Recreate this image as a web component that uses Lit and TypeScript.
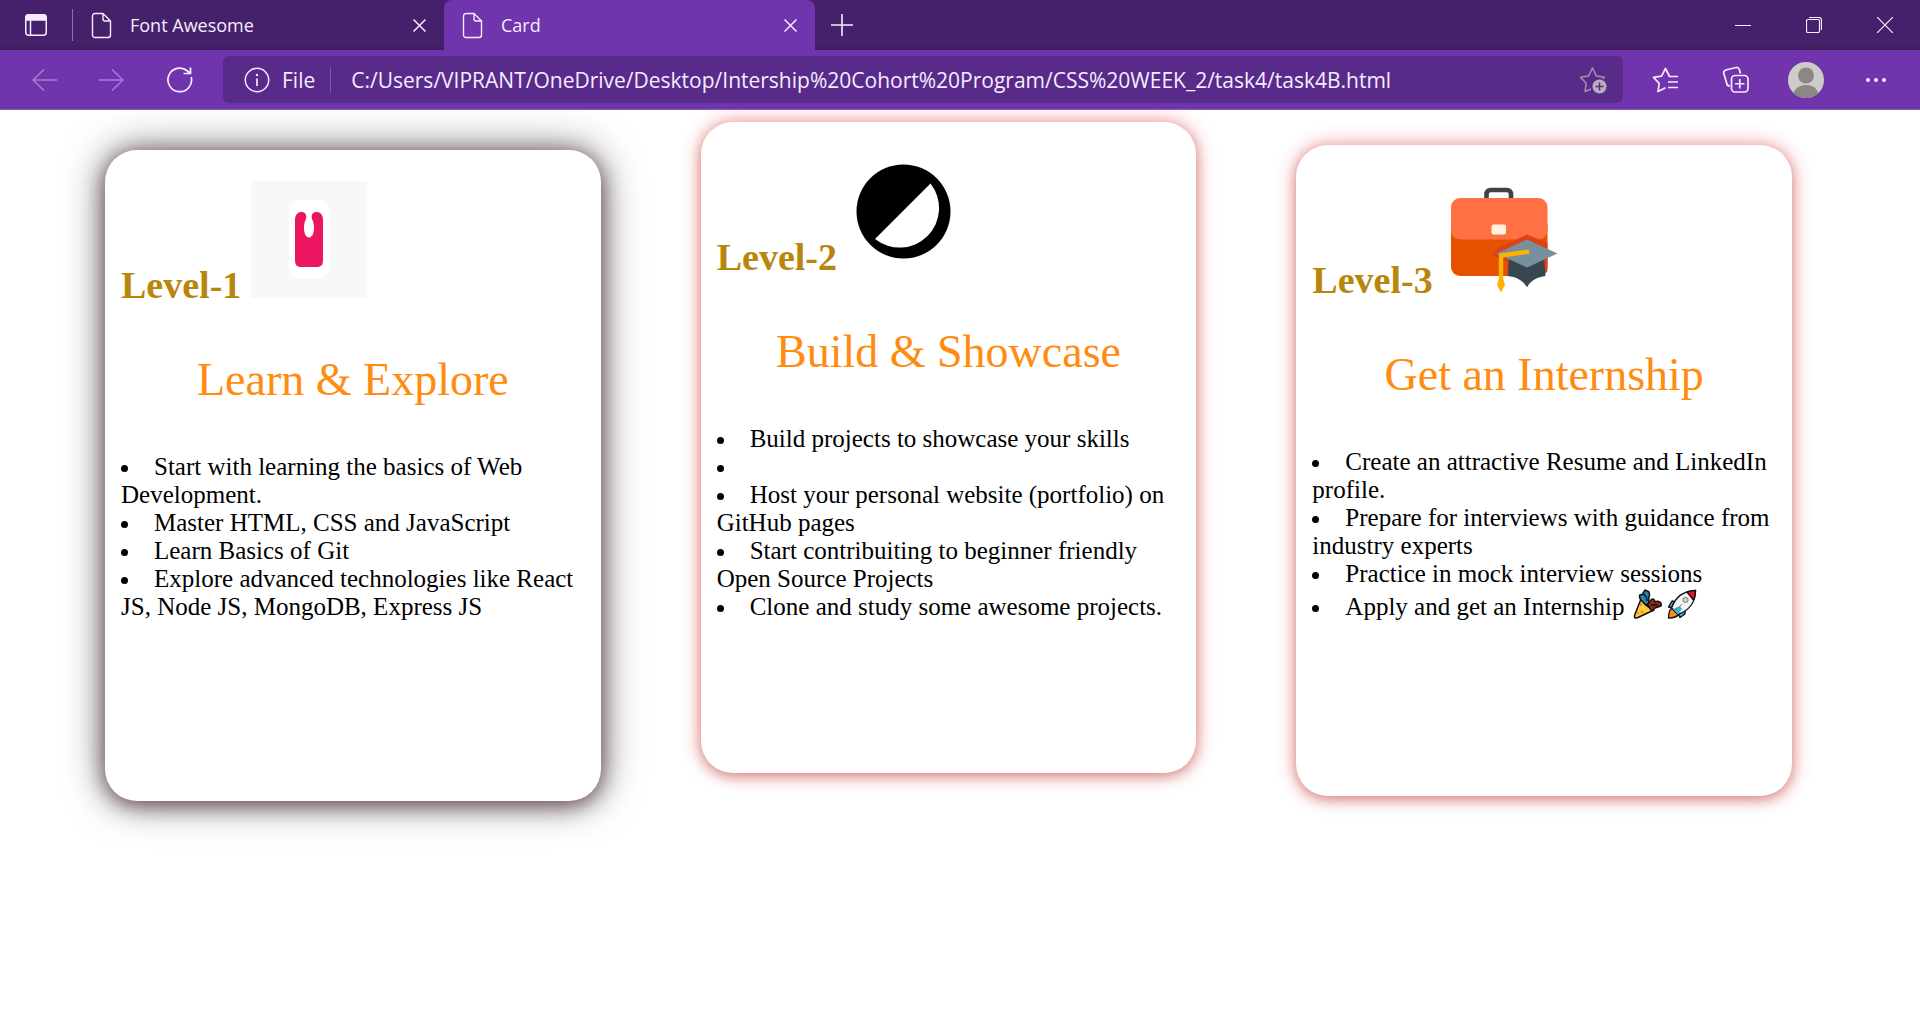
import { LitElement, html, css, svg, nothing } from "lit";
import { customElement, property } from "lit/decorators.js";

const docIcon = html`<svg class="doc" width="21" height="27" viewBox="0 0 21 27" aria-hidden="true">
  <path d="M4 1.5H12L19.5 9V23a2.5 2.5 0 0 1-2.5 2.5H4A2.5 2.5 0 0 1 1.5 23V4A2.5 2.5 0 0 1 4 1.5ZM12 1.5V7a2 2 0 0 0 2 2h5.500" />
</svg>`;

const closeIcon = html`<svg width="15" height="15" viewBox="0 0 15 15" aria-hidden="true">
  <path d="M1.500 1.500 13.500 13.500M13.500 1.500 1.500 13.500" stroke-width="1.500" />
</svg>`;

@customElement("browser-tab")
export class BrowserTab extends LitElement {
  @property() label = "";
  @property({ type: Boolean, reflect: true }) active = false;

  static styles = css`
    :host {
      display: block;
      flex: 0 1 371px;
      min-width: 0;
      color: #f6ecff;
    }
    :host([active]) {
      background: #7034ac;
      border-radius: 8px 8px 0 0;
    }
    .tab {
      display: flex;
      align-items: center;
      height: 50px;
      padding: 0 11px 0 18px;
    }
    .select {
      flex: 1;
      min-width: 0;
      display: flex;
      align-items: center;
      gap: 18px;
      font: inherit;
      line-height: 22px;
      text-align: left;
    }
    button {
      background: none;
      border: 0;
      padding: 0;
      color: inherit;
    }
    .close {
      display: flex;
      align-items: center;
      justify-content: center;
      width: 28px;
      height: 28px;
    }
    svg {
      flex: none;
      fill: none;
      stroke: currentColor;
      stroke-width: 1.4;
      stroke-linejoin: round;
    }
  `;

  render() {
    return html`<div class="tab">
      <button class="select">${docIcon}<span>${this.label}</span></button>
      <button class="close" aria-label="Close tab">${closeIcon}</button>
    </div>`;
  }
}

@customElement("browser-chrome")
export class BrowserChrome extends LitElement {
  static styles = css`
    :host {
      display: block;
      position: relative;
      font-family: "Open Sans", "Noto Sans", sans-serif;
      color: #f6ecff;
    }
    button {
      background: none;
      border: 0;
      padding: 0;
      color: inherit;
      font: inherit;
      display: flex;
      align-items: center;
      justify-content: center;
    }
    svg {
      fill: none;
      stroke: currentColor;
      stroke-width: 1.5;
      flex: none;
    }
    .strip {
      display: flex;
      align-items: center;
      height: 50px;
      font-size: 18px;
      background: linear-gradient(#46216b 0 42px, #3f1e60 50px);
    }
    .menu {
      width: 73px;
      height: 32px;
      border-right: 1px solid #9468b9;
      box-sizing: border-box;
    }
    .add {
      width: 54px;
      height: 50px;
    }
    .window {
      display: flex;
      margin-left: auto;
    }
    .window button {
      width: 71px;
      height: 50px;
    }
    .bar {
      display: flex;
      align-items: center;
      height: 60px;
      box-sizing: border-box;
      padding: 0 9px 0 10px;
      background: #7034ac;
      border-bottom: 1px solid #8a5cbe;
    }
    .nav {
      width: 68px;
      height: 47px;
    }
    .dim {
      color: #ab7ed8;
    }
    .address {
      flex: 1;
      min-width: 0;
      display: flex;
      align-items: center;
      height: 47px;
      margin: 0 8px 0 9px;
      padding: 0 16px 0 21px;
      box-sizing: border-box;
      border-radius: 6px;
      background: #582b8a;
      font-size: 21px;
    }
    .info {
      gap: 12px;
      padding-right: 15px;
      margin-right: 20px;
      height: 26px;
      border-right: 1px solid #8355b2;
    }
    input {
      flex: 1;
      min-width: 0;
      padding: 0;
      border: 0;
      outline: 0;
      background: none;
      color: inherit;
      font: inherit;
    }
    .action {
      width: 70px;
      height: 47px;
    }
    .muted {
      color: #a88fb5;
    }
  `;

  render() {
    return html`
      <div class="strip">
        <button class="menu" aria-label="Tab actions">
          <svg width="24" height="24" viewBox="0 0 24 24">
            <rect x="1.750" y="1.750" width="20.500" height="20.500" rx="3" />
            <path d="M2 7V4.500A2.500 2.500 0 0 1 4.500 2h15A2.500 2.500 0 0 1 22 4.500V7Z" fill="currentColor" />
            <path d="M6.500 7V22" />
          </svg>
        </button>
        <browser-tab label="Font Awesome"></browser-tab>
        <browser-tab label="Card" active></browser-tab>
        <button class="add" aria-label="New tab">
          <svg width="22" height="22" viewBox="0 0 22 22"><path d="M11 0V22M0 11H22" stroke-width="1.600" /></svg>
        </button>
        <div class="window">
          <button aria-label="Minimize">
            <svg width="16" height="16" viewBox="0 0 16 16"><path d="M0 8.500H16" stroke-width="1" /></svg>
          </button>
          <button aria-label="Restore">
            <svg width="16" height="16" viewBox="0 0 16 16" stroke-width="1">
              <rect x=".5" y="2.500" width="13" height="13" rx="1.500" stroke-width="1.200" />
              <path d="M3 .5H13A2.500 2.500 0 0 1 15.500 3V13" stroke-width="1.200" />
            </svg>
          </button>
          <button aria-label="Close">
            <svg width="16" height="16" viewBox="0 0 16 16"><path d="M0 0 16 16M16 0 0 16" stroke-width="1.200" /></svg>
          </button>
        </div>
      </div>
      <div class="bar">
        <button class="nav dim" aria-label="Back">
          <svg width="26" height="24" viewBox="0 0 26 24"><path d="M13 1.500 2 12 13 22.500M2 12H26" stroke-width="1.300" /></svg>
        </button>
        <button class="nav dim" aria-label="Forward">
          <svg width="26" height="24" viewBox="0 0 26 24"><path d="M13 1.500 24 12 13 22.500M24 12H0" stroke-width="1.300" /></svg>
        </button>
        <button class="nav" aria-label="Refresh">
          <svg width="28" height="28" viewBox="0 0 28 28">
            <path d="M25.200 11A11.800 11.800 0 1 1 21.500 5L24.500 7.500M24.500 1.500V7.500H17.500" stroke-width="1.700" />
          </svg>
        </button>
        <div class="address">
          <button class="info">
            <svg width="26" height="26" viewBox="0 0 26 26" aria-hidden="true">
              <circle cx="13" cy="13" r="11.700" />
              <path d="M13 11.500V19" stroke-width="1.700" />
              <circle cx="13" cy="8" r="1.200" fill="currentColor" stroke="none" />
            </svg>
            <span>File</span>
          </button>
          <input
            aria-label="Address"
            value="C:/Users/VIPRANT/OneDrive/Desktop/Intership%20Cohort%20Program/CSS%20WEEK_2/task4/task4B.html"
          />
          <button class="muted" aria-label="Add to favorites">
            <svg width="28" height="28" viewBox="0 0 28 28">
              <path
                d="M12 23 6 25.500 7.200 17.300 1.500 11.200 9.500 10 13.500 2 17.300 10 25.500 11.200 23.500 13"
                stroke-linejoin="round"
              />
              <circle cx="20.500" cy="20.500" r="7" fill="#b9aebb" stroke="none" />
              <path d="M20.500 16.500V24.500M16.500 20.500H24.500" stroke="#582b8a" />
            </svg>
          </button>
        </div>
        <button class="action" aria-label="Favorites">
          <svg width="28" height="28" viewBox="0 0 28 28">
            <path
              d="M26 10.500H17.500L13.500 2.500 9.500 10.200 1.500 11.400 7.200 17.300 6 25.500 13.500 21.800M16 16H26M16 21.500H26"
              stroke-width="1.700"
              stroke-linejoin="round"
            />
          </svg>
        </button>
        <button class="action" aria-label="Collections">
          <svg width="28" height="28" viewBox="0 0 28 28" stroke-width="1.700">
            <rect x="9.500" y="9.500" width="16.500" height="16.500" rx="3.500" stroke-width="1.700" />
            <path
              d="M17.750 13V22.500M13 17.750H22.500M8 20A3 3 0 0 1 4.800 17.500L1.800 7.500A3 3 0 0 1 3.800 4L14 1.500A3 3 0 0 1 17.300 3.500L18.500 7.500"
              stroke-width="1.700"
            />
          </svg>
        </button>
        <button class="action" aria-label="Profile">
          <svg width="36" height="36" viewBox="0 0 36 36" stroke="none">
            <circle cx="18" cy="18" r="18" fill="#cfcbc8" stroke="none" />
            <circle cx="18" cy="13.500" r="8" fill="#8b8785" stroke="none" />
            <path d="M5.500 31C8 25 13 23 18 23s10 2 12.500 8A18 18 0 0 1 5.500 31Z" fill="#8b8785" stroke="none" />
          </svg>
        </button>
        <button class="action" aria-label="Settings and more">
          <svg width="22" height="6" viewBox="0 0 22 6">
            <g fill="currentColor" stroke="none">
              <circle cx="3" cy="3" r="2" /><circle cx="11" cy="3" r="2" /><circle cx="19" cy="3" r="2" />
            </g>
          </svg>
        </button>
      </div>
    `;
  }
}

const art = {
  learn: svg`
    <rect width="116" height="117" fill="#f8f8f8" />
    <rect x="38" y="19" width="40" height="79" rx="11" fill="#fff" />
    <path d="M50 31C46 31 44 35 44 39V79C44 84 46 86 50 86H66C70 86 72 84 72 79V39C72 35 70 31 66 31C61.500 31 60 34 61 38C64.500 44 63.500 56.500 58 56.500C52.500 56.500 51.500 44 55 38C56 34 54.500 31 50 31Z" fill="#ec1561" />`,
  build: svg`
    <circle cx="57.500" cy="58.500" r="47" />
    <path d="M84.500 30.500A39.500 39.500 0 0 1 29 86Z" fill="#fff" />`,
  intern: svg`
    <path d="M44.500 23V18A4 4 0 0 1 48.500 14H65A4 4 0 0 1 69 18V23" fill="none" stroke="#424242" stroke-width="4.600" />
    <rect x="9" y="40" width="96.500" height="60" rx="9" fill="#e65100" />
    <path d="M18 22H96.500A9 9 0 0 1 105.500 31V54.500A9 9 0 0 1 96.500 63.500H18A9 9 0 0 1 9 54.500V31A9 9 0 0 1 18 22Z" fill="#ff7043" />
    <rect x="49.500" y="48.500" width="14.500" height="10" rx="2" fill="#fff3e0" />
    <path d="M51 78 56 72 85 58.500 105.500 67V95L101 100H66L65 86 56 83Z" fill="#dd4217" />
    <path d="M67 80H102L103.500 100C96 101 89 104 85 111.300C81 104 74 101 66 100Z" fill="#37474f" />
    <path d="M85 63.500 115.500 77.500 85 91.500 54.500 77.500Z" fill="#78909c" />
    <path d="M87 75.500 59 79.500V104" fill="none" stroke="#ffb300" stroke-width="4.400" stroke-linejoin="round" />
    <path d="M57 102H61L63 109 59 116.500 55 109Z" fill="#ffb300" />`,
};

const party = html`<svg class="emoji" width="34" height="32" viewBox="0 0 34 32" role="img" aria-label="party popper">
  <g stroke="#111" stroke-width="1.500" stroke-linejoin="round">
    <path d="M10 11 3.500 27.500Q3 31 7 29.500L23 22Q15 19 10 11Z" fill="#ffc83d" />
    <path d="M12 14C7 10 8 5 11 7L14 2 18 4C20 9 16 10 18 15L15 17Z" fill="#2486a8" />
    <path d="M18 15C20 10 23 10 24 14 28 12 31 15 30 18L24 20 21 23C18 21 19 18 16 17Z" fill="#8e2b20" />
    <path d="M13 6C14 9 17 9 16 13M20 17 27 17" fill="none" />
  </g>
  <path d="M10 15V18M10 23 12 25M7 24V26" stroke="#f28a2e" stroke-width="2" />
</svg>`;

const rocket = html`<svg class="emoji" width="34" height="32" viewBox="0 0 34 32" role="img" aria-label="rocket">
  <g stroke="#111" stroke-width="1.400" stroke-linejoin="round">
    <path d="M7 20C4 22 3.500 26 3.500 30 8 30 12 29 14 26Z" fill="#f78d26" />
    <path d="M11 14 7 13 3.500 19 8 20ZM20 22 20 26 15 29.500 13 25Z" fill="#35b8d4" />
    <path d="M6.500 20C10 10 18 3 30.500 2.500C30.500 15 23 23 13 26.500Z" fill="#f2f4f5" />
    <path d="M22 4C25 3 28 2.500 30.500 2.500C30.500 6 30 9 28.500 12Z" fill="#e81224" />
  </g>
  <path d="M13 26.500 17 21 15 18 8 21Z" fill="#35b8d4" />
  <circle cx="20.500" cy="12" r="2.600" fill="#d2d2d2" stroke="#777" />
  <path d="M11 22 17 16" stroke="#777" />
</svg>`;

interface Level {
  name: string;
  title: string;
  picture: keyof typeof art;
  items: string[];
  celebrate?: boolean;
  hover?: boolean;
}

const levels: Level[] = [
  {
    name: "Level-1",
    title: "Learn & Explore",
    picture: "learn",
    hover: true,
    items: [
      "Start with learning the basics of Web Development.",
      "Master HTML, CSS and JavaScript",
      "Learn Basics of Git",
      "Explore advanced technologies like React JS, Node JS, MongoDB, Express JS",
    ],
  },
  {
    name: "Level-2",
    title: "Build & Showcase",
    picture: "build",
    items: [
      "Build projects to showcase your skills",
      "",
      "Host your personal website (portfolio) on GitHub pages",
      "Start contribuiting to beginner friendly Open Source Projects",
      "Clone and study some awesome projects.",
    ],
  },
  {
    name: "Level-3",
    title: "Get an Internship",
    picture: "intern",
    celebrate: true,
    items: [
      "Create an attractive Resume and LinkedIn profile.",
      "Prepare for interviews with guidance from industry experts",
      "Practice in mock interview sessions",
      "Apply and get an Internship ",
    ],
  },
];

@customElement("app-root")
export class AppRoot extends LitElement {
  static styles = css`
    :host {
      display: block;
      min-height: 100vh;
      background: #fff;
      color: #000;
      font-family: "Liberation Serif", "Times New Roman", serif;
    }
    .cards {
      display: flex;
      align-items: last baseline;
      gap: 100px;
      padding: 12px 128px 40px 105px;
    }
    .card {
      flex: 1 1 0;
      min-width: 0;
      min-height: 651px;
      box-sizing: border-box;
      padding: 31px 16px 16px;
      border-radius: 32px;
      background: #fff;
      box-shadow: 0 4px 12px rgba(160, 20, 20, 0.3), 0 0 20px rgba(220, 30, 30, 0.45);
    }
    .hover {
      box-shadow: 0 4px 20px rgba(60, 20, 30, 0.6), 0 0 40px rgba(30, 20, 20, 0.6);
    }
    h2 {
      margin: 0;
      font-size: 38px;
      line-height: normal;
      color: #b8860b;
    }
    .title {
      margin: 46px 0 47px;
      font-size: 46px;
      line-height: 53px;
      text-align: center;
      color: #ff8c10;
    }
    ul {
      margin: 0;
      padding: 0;
      list-style: disc inside;
      font-size: 25px;
      line-height: 28px;
    }
    .emoji {
      vertical-align: -5px;
    }
  `;

  render() {
    return html`
      <browser-chrome></browser-chrome>
      <main class="cards">
        ${levels.map(
          (level) => html`<article class="card ${level.hover ? "hover" : ""}">
            <h2>${level.name} <svg width="116" height="117" viewBox="0 0 116 117" aria-hidden="true">${art[level.picture]}</svg></h2>
            <p class="title">${level.title}</p>
            <ul>
              ${level.items.map(
                (item, i) =>
                  html`<li>${item}${level.celebrate && i === level.items.length - 1 ? html`${party}${rocket}` : nothing}</li>`
              )}
            </ul>
          </article>`
        )}
      </main>
    `;
  }
}
